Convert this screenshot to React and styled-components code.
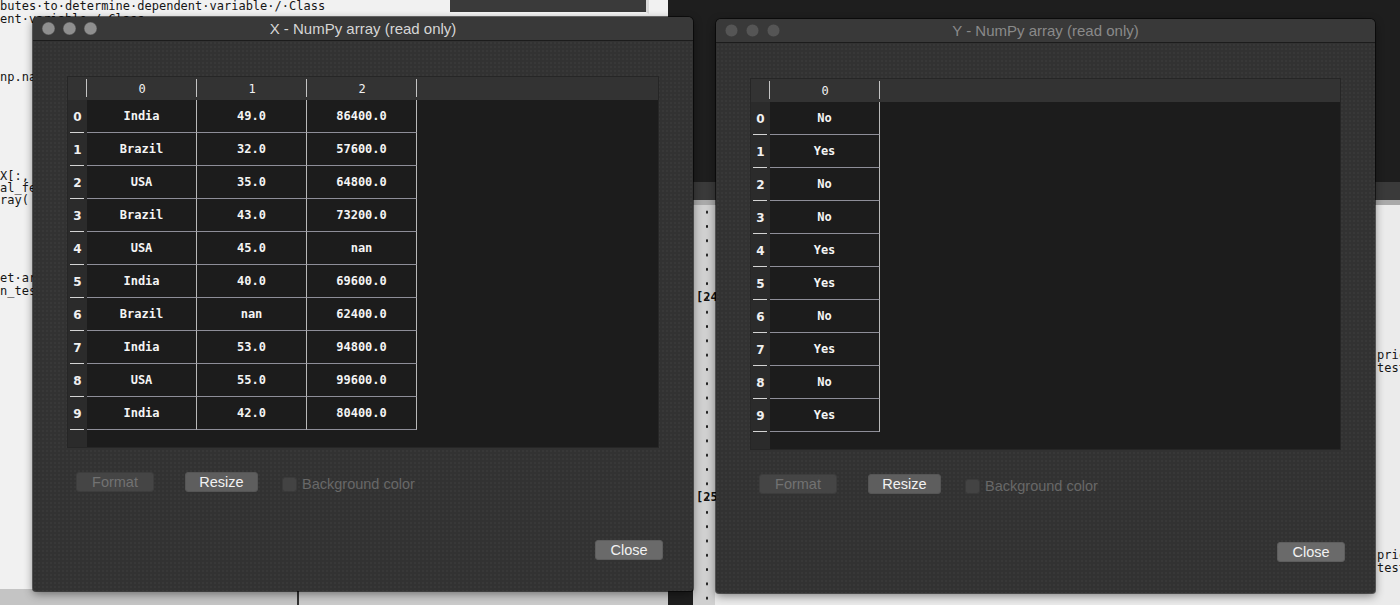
import React from 'react'
import styled, { createGlobalStyle } from 'styled-components'

const GlobalStyle = createGlobalStyle`
  html, body {
    margin: 0;
    padding: 0;
    background: #1e1e1e;
    overflow: hidden;
  }
`

const xRows = [
  ['India', '49.0', '86400.0'],
  ['Brazil', '32.0', '57600.0'],
  ['USA', '35.0', '64800.0'],
  ['Brazil', '43.0', '73200.0'],
  ['USA', '45.0', 'nan'],
  ['India', '40.0', '69600.0'],
  ['Brazil', 'nan', '62400.0'],
  ['India', '53.0', '94800.0'],
  ['USA', '55.0', '99600.0'],
  ['India', '42.0', '80400.0'],
]

const yRows = ['No', 'Yes', 'No', 'No', 'Yes', 'Yes', 'No', 'Yes', 'No', 'Yes'].map((v) => [v])

const windows = [
  { id: 'x', title: 'X - NumPy array (read only)', left: 33, top: 17, width: 660, active: true, columns: ['0', '1', '2'], rows: xRows },
  { id: 'y', title: 'Y - NumPy array (read only)', left: 716, top: 19, width: 659, active: false, columns: ['0'], rows: yRows },
]

const leftCode = [
  { top: 0, text: 'butes·to·determine·dependent·variable·/·Class' },
  { top: 13, text: 'ent·variable·/·Class' },
  { top: 71, text: 'np.nan' },
  { top: 170, text: 'X[:,' },
  { top: 182, text: 'al_fe' },
  { top: 194, text: 'ray(' },
  { top: 272, text: 'et·ar' },
  { top: 285, text: 'n_tes' },
]

function App() {
  return (
    <>
      <GlobalStyle />
      <Desktop>
        <LeftEditor>
          {leftCode.map((l) => (
            <CodeLine key={l.top} style={{ top: l.top }}>{l.text}</CodeLine>
          ))}
          <TopBar />
          <StatusStrip />
        </LeftEditor>

        <RightEditor>
          <RightHeader />
          <RightBody>
            <Gutter>
              <Prompt $at={85}>[24]</Prompt>
              <Prompt $at={285}>[25]</Prompt>
              <Dots />
            </Gutter>
            <RightCode>
              <CodeRow $at={143}>pric</CodeRow>
              <CodeRow $at={156}>test</CodeRow>
              <CodeRow $at={343}>pric</CodeRow>
              <CodeRow $at={356}>test</CodeRow>
            </RightCode>
          </RightBody>
        </RightEditor>

        {windows.map((w) => (
          <ArrayWindow key={w.id} {...w} />
        ))}
      </Desktop>
    </>
  )
}

function ArrayWindow({ title, left, top, width, active, columns, rows }) {
  return (
    <Window style={{ left, top, width }}>
      <TitleBar>
        <Lights>
          <Light $active={active} />
          <Light $active={active} />
          <Light $active={active} />
        </Lights>
        <Title $active={active}>{title}</Title>
        <span />
      </TitleBar>
      <Body>
        <Table $cols={columns.length}>
          <Corner />
          {columns.map((c) => (
            <HeadCell key={c}>{c}</HeadCell>
          ))}
          <HeadFill />
          {rows.map((r, i) => (
            <React.Fragment key={i}>
              <RowHead>{i}</RowHead>
              {r.map((v, j) => (
                <Cell key={j}>{v}</Cell>
              ))}
              <Fill />
            </React.Fragment>
          ))}
          <RowHeadFill />
          {columns.map((c) => (
            <Fill key={c} />
          ))}
          <Fill />
        </Table>

        <Controls>
          <Button $kind="disabled" $w={78}>Format</Button>
          <Button $w={73}>Resize</Button>
          <Check>
            <Box />
            <span>Background color</span>
          </Check>
        </Controls>

        <Footer>
          <Button $kind="close" $w={68}>Close</Button>
        </Footer>
      </Body>
    </Window>
  )
}

export default App

const Desktop = styled.div`
  position: relative;
  width: 1400px;
  height: 605px;
  overflow: hidden;
  background: #1e1e1e;
  font-family: "Liberation Sans", Arial, sans-serif;
`

const LeftEditor = styled.div`
  position: absolute;
  left: 0;
  top: 0;
  width: 668px;
  height: 605px;
  background: #f1f1f1;
`

const CodeLine = styled.div`
  position: absolute;
  left: 0;
  font-family: "DejaVu Sans Mono", monospace;
  font-size: 12px;
  line-height: 13px;
  color: #151515;
  white-space: pre;
`

const TopBar = styled.div`
  position: absolute;
  left: 450px;
  top: 0;
  width: 196px;
  height: 12px;
  background: #3a3a3a;
  border-bottom: 2px solid #f4f4f4;
  border-right: 3px solid #d8d8d8;
`

const StatusStrip = styled.div`
  position: absolute;
  left: 0;
  bottom: 0;
  width: 100%;
  height: 16px;
  background: linear-gradient(90deg, #c4c4c4 0 297px, #333 297px 299px, #cacaca 299px);
`

const RightEditor = styled.div`
  position: absolute;
  left: 693px;
  top: 182px;
  right: 0;
  bottom: 0;
  display: flex;
  flex-direction: column;
  background: #ebebeb;
`

const RightHeader = styled.div`
  height: 18px;
  background: #3a3a3a;
  border-bottom: 5px solid #a9a9a9;
`

const RightBody = styled.div`
  flex: 1;
  display: flex;
`

const Gutter = styled.div`
  position: relative;
  width: 22px;
  background: #d0d0d0;
`

const Prompt = styled.div`
  position: absolute;
  left: 3px;
  top: ${(p) => p.$at}px;
  font-family: "DejaVu Sans Mono", monospace;
  font-weight: bold;
  font-size: 12px;
  color: #111;
`

const Dots = styled.div`
  position: absolute;
  left: 12px;
  top: 0;
  bottom: 0;
  width: 4px;
  background-image: radial-gradient(circle, #1a1a1a 1px, transparent 1.4px);
  background-size: 4px 14.3px;
`

const RightCode = styled.div`
  position: relative;
  flex: 1;
  overflow: hidden;
`

const CodeRow = styled.div`
  position: absolute;
  left: 662px;
  top: ${(p) => p.$at}px;
  font-family: "DejaVu Sans Mono", monospace;
  font-size: 12px;
  color: #151515;
`

const Window = styled.div`
  position: absolute;
  height: 574px;
  display: flex;
  flex-direction: column;
  background-color: #323232;
  background-image: radial-gradient(circle, rgba(255, 255, 255, 0.05) 0.6px, transparent 0.9px);
  background-size: 4px 4px;
  border-radius: 5px 5px 3px 3px;
  box-shadow: 0 0 0 1px rgba(0, 0, 0, 0.55), 0 3px 10px rgba(0, 0, 0, 0.45);
  overflow: hidden;
`

const TitleBar = styled.div`
  height: 23px;
  display: grid;
  grid-template-columns: 1fr auto 1fr;
  align-items: center;
  background: #393939;
  border-bottom: 1px solid #1c1c1c;
`

const Lights = styled.div`
  display: flex;
  gap: 8px;
  padding-left: 9px;
`

const Light = styled.span`
  width: 13px;
  height: 13px;
  border-radius: 50%;
  background: ${(p) => (p.$active ? '#8f8f8f' : '#555')};
  box-shadow: inset 0 0 0 0.5px rgba(0, 0, 0, 0.3);
`

const Title = styled.div`
  font-size: 15px;
  color: ${(p) => (p.$active ? '#d6d6d6' : '#8a8a8a')};
  white-space: nowrap;
`

const Body = styled.div`
  flex: 1;
  display: flex;
  flex-direction: column;
  padding: 36px 35px 31px 35px;
`

const Table = styled.div`
  height: 370px;
  display: grid;
  grid-template-columns: 19px repeat(${(p) => p.$cols}, 110px) 1fr;
  grid-template-rows: 23px repeat(10, 33px) 1fr;
  background: #1c1c1c;
  box-shadow: 0 0 0 1px #262626;
`

const headSep = `
  position: relative;
  &::after {
    content: '';
    position: absolute;
    right: 0;
    top: 2px;
    bottom: 3px;
    width: 1px;
    background: #c4c4c4;
  }
`

const Corner = styled.div`
  background: #333;
  ${headSep}
`

const HeadCell = styled.div`
  background: #333;
  display: flex;
  align-items: center;
  justify-content: center;
  font-family: "DejaVu Sans Mono", monospace;
  font-size: 12px;
  color: #f2f2f2;
  ${headSep}
`

const HeadFill = styled.div`
  background: #333;
`

const RowHead = styled.div`
  position: relative;
  background: #2b2b2b;
  display: flex;
  align-items: center;
  justify-content: center;
  font-family: "DejaVu Sans", sans-serif;
  font-weight: bold;
  font-size: 12px;
  color: #f0f0f0;
  &::after {
    content: '';
    position: absolute;
    left: 2px;
    right: 3px;
    bottom: 0;
    height: 1px;
    background: #d4d4d4;
  }
`

const RowHeadFill = styled.div`
  background: #2b2b2b;
`

const Cell = styled.div`
  display: flex;
  align-items: center;
  justify-content: center;
  border-right: 1px solid #b8b8b8;
  border-bottom: 1px solid #8e8e98;
  font-family: "DejaVu Sans Mono", monospace;
  font-weight: bold;
  font-size: 12px;
  color: #f4f4f4;
`

const Fill = styled.div``

const Controls = styled.div`
  display: flex;
  align-items: center;
  gap: 31px;
  margin-top: 25px;
  padding-left: 8px;
`

const buttonSkins = {
  disabled: 'background: #454545; color: #727272; border-color: #3d3d3d;',
  close: 'background: #6a6a6a; color: #f2f2f2; border-color: #5e5e5e;',
  normal: 'background: #5e5e5e; color: #f2f2f2; border-color: #555;',
}

const Button = styled.div`
  box-sizing: border-box;
  width: ${(p) => p.$w}px;
  height: 20px;
  display: flex;
  align-items: center;
  justify-content: center;
  border: 1px solid;
  border-radius: 3px;
  font-size: 14.5px;
  ${(p) => buttonSkins[p.$kind || 'normal']}
`

const Check = styled.div`
  display: flex;
  align-items: center;
  gap: 5px;
  margin-left: -7px;
  margin-top: 4px;
  font-size: 14.5px;
  color: #686868;
`

const Box = styled.span`
  width: 15px;
  height: 15px;
  box-sizing: border-box;
  border-radius: 3px;
  background: #434343;
  border: 1px solid #3a3a3a;
`

const Footer = styled.div`
  margin-top: auto;
  display: flex;
  justify-content: flex-end;
  margin-right: -5px;
`
